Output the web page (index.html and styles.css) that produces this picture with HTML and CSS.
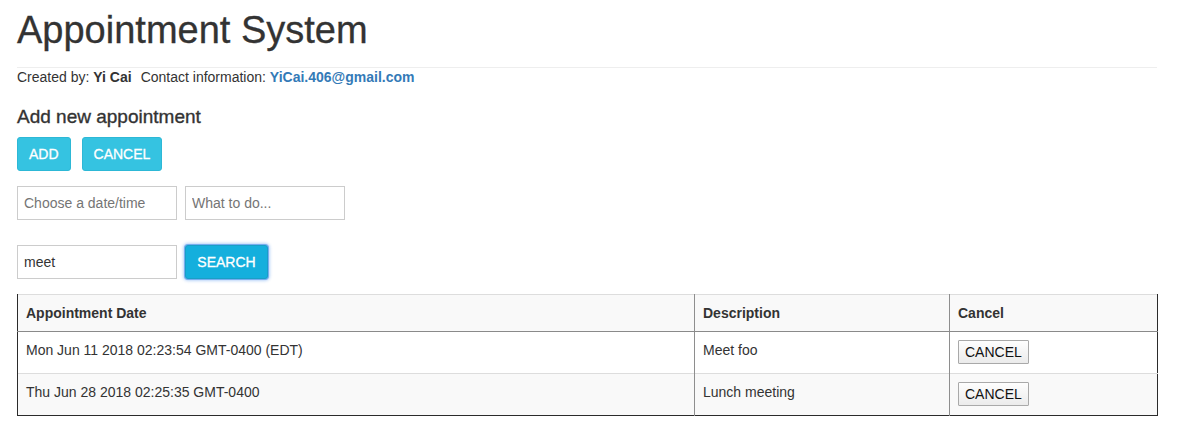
FILE: index.html
```html
<!DOCTYPE html>
<html lang="en">
<head>
<meta charset="utf-8">
<title>Appointment System</title>
<link rel="stylesheet" href="styles.css">
</head>
<body>
<div class="page">
  <h1 class="title">Appointment System</h1>
  <hr class="rule">
  <div class="credits">Created by: <b>Yi Cai</b><span class="contact">Contact information: <a class="mail" href="#">YiCai.406@gmail.com</a></span></div>

  <h4 class="section-title">Add new appointment</h4>
  <div class="btn-row">
    <button class="btn btn-info">ADD</button>
    <button class="btn btn-info">CANCEL</button>
  </div>
  <div class="form-row">
    <input class="field" type="text" placeholder="Choose a date/time">
    <input class="field" type="text" placeholder="What to do...">
  </div>
  <div class="search-row">
    <input class="field" type="text" value="meet">
    <button class="btn btn-search">SEARCH</button>
  </div>

  <table class="appts">
    <colgroup>
      <col class="c1">
      <col class="c2">
      <col class="c3">
    </colgroup>
    <tr class="head striped">
      <th>Appointment Date</th>
      <th>Description</th>
      <th>Cancel</th>
    </tr>
    <tr class="row">
      <td>Mon Jun 11 2018 02:23:54 GMT-0400 (EDT)</td>
      <td>Meet foo</td>
      <td><button class="cell-btn">CANCEL</button></td>
    </tr>
    <tr class="row striped last">
      <td>Thu Jun 28 2018 02:25:35 GMT-0400</td>
      <td>Lunch meeting</td>
      <td><button class="cell-btn">CANCEL</button></td>
    </tr>
  </table>
</div>
</body>
</html>
```

FILE: styles.css
```css
* { box-sizing: border-box; }

body {
  margin: 0;
  font-family: "Liberation Sans", Arial, Helvetica, sans-serif;
  font-size: 14px;
  line-height: 20px;
  color: #333;
  background: #fff;
}

.page {
  width: 1157px;
  padding-left: 17px;
}

.title {
  margin: 9px 0 0;
  font-size: 38px;
  font-weight: 400;
  line-height: 42px;
  color: #333;
  -webkit-text-stroke: 0.3px #333;
}

.rule {
  margin: 16px 0 0;
  border: 0;
  border-top: 1px solid #eee;
  height: 0;
}

.credits {
  font-size: 14px;
  line-height: 18px;
}

.credits b { font-weight: 700; }

.contact { margin-left: 9px; }

.mail {
  color: #337ab7;
  font-weight: 700;
  text-decoration: none;
}

.section-title {
  margin: 20px 0 10px;
  font-size: 19px;
  font-weight: 400;
  line-height: 21px;
  color: #333;
  -webkit-text-stroke: 0.35px #333;
}

.btn-row {
  display: flex;
  gap: 11px;
}

.btn {
  font-family: "Liberation Sans", Arial, sans-serif;
  font-size: 14px;
  line-height: 20px;
  padding: 6px 11px;
  height: 34px;
  border-radius: 3px;
  color: #fff;
  cursor: pointer;
  -webkit-text-stroke: 0.3px #fff;
}

.btn-info {
  background: #35c3e1;
  border: 1px solid #2db8d6;
}

.form-row {
  display: flex;
  gap: 8px;
  margin-top: 15px;
}

.search-row {
  display: flex;
  gap: 8px;
  margin-top: 25px;
  align-items: flex-start;
}

.field {
  width: 160px;
  height: 34px;
  padding: 6px 6px;
  border: 1px solid #ccc;
  border-radius: 0;
  font-family: "Liberation Sans", Arial, sans-serif;
  font-size: 14px;
  color: #333;
  background: #fff;
  outline: none;
}

.field::placeholder { color: #757575; }

.btn-search {
  background: #14afdd;
  border: 1px solid #1a9ec6;
  width: 83px;
  padding: 6px 0;
  text-align: center;
  box-shadow: 0 0 0 1px rgba(92, 158, 235, 0.75), 0 0 3px 2px rgba(100, 160, 240, 0.45);
}

.appts {
  margin-top: 15px;
  width: 1140px;
  table-layout: fixed;
  border-collapse: collapse;
  border-top: 1px solid #ddd;
  border-left: 1px solid #2b2b2b;
  border-right: 1px solid #2b2b2b;
  border-bottom: 1px solid #2b2b2b;
}

.c1 { width: 677px; }
.c2 { width: 255px; }
.c3 { width: 208px; }

.appts th,
.appts td {
  padding: 8px;
  text-align: left;
  vertical-align: top;
  line-height: 20px;
  font-size: 14px;
  border-left: 1px solid #8e8e8e;
}

.appts td { padding-bottom: 9px; }

.appts th:first-child,
.appts td:first-child { border-left: 1px solid #2b2b2b; }

.appts th { font-weight: 700; }

.head th { border-bottom: 1px solid #8a8a8a; }

.row td { border-top: 1px solid #ddd; }

.head + .row td { border-top: 1px solid #8a8a8a; }

.striped { background: #f9f9f9; }

.cell-btn {
  font-family: "Liberation Sans", Arial, sans-serif;
  font-size: 14px;
  line-height: 20px;
  height: 24px;
  padding: 1px 6px;
  border: 1px solid #a9a9a9;
  border-radius: 1px;
  background: linear-gradient(#fefefe, #ebebeb);
  color: #111;
}
```
